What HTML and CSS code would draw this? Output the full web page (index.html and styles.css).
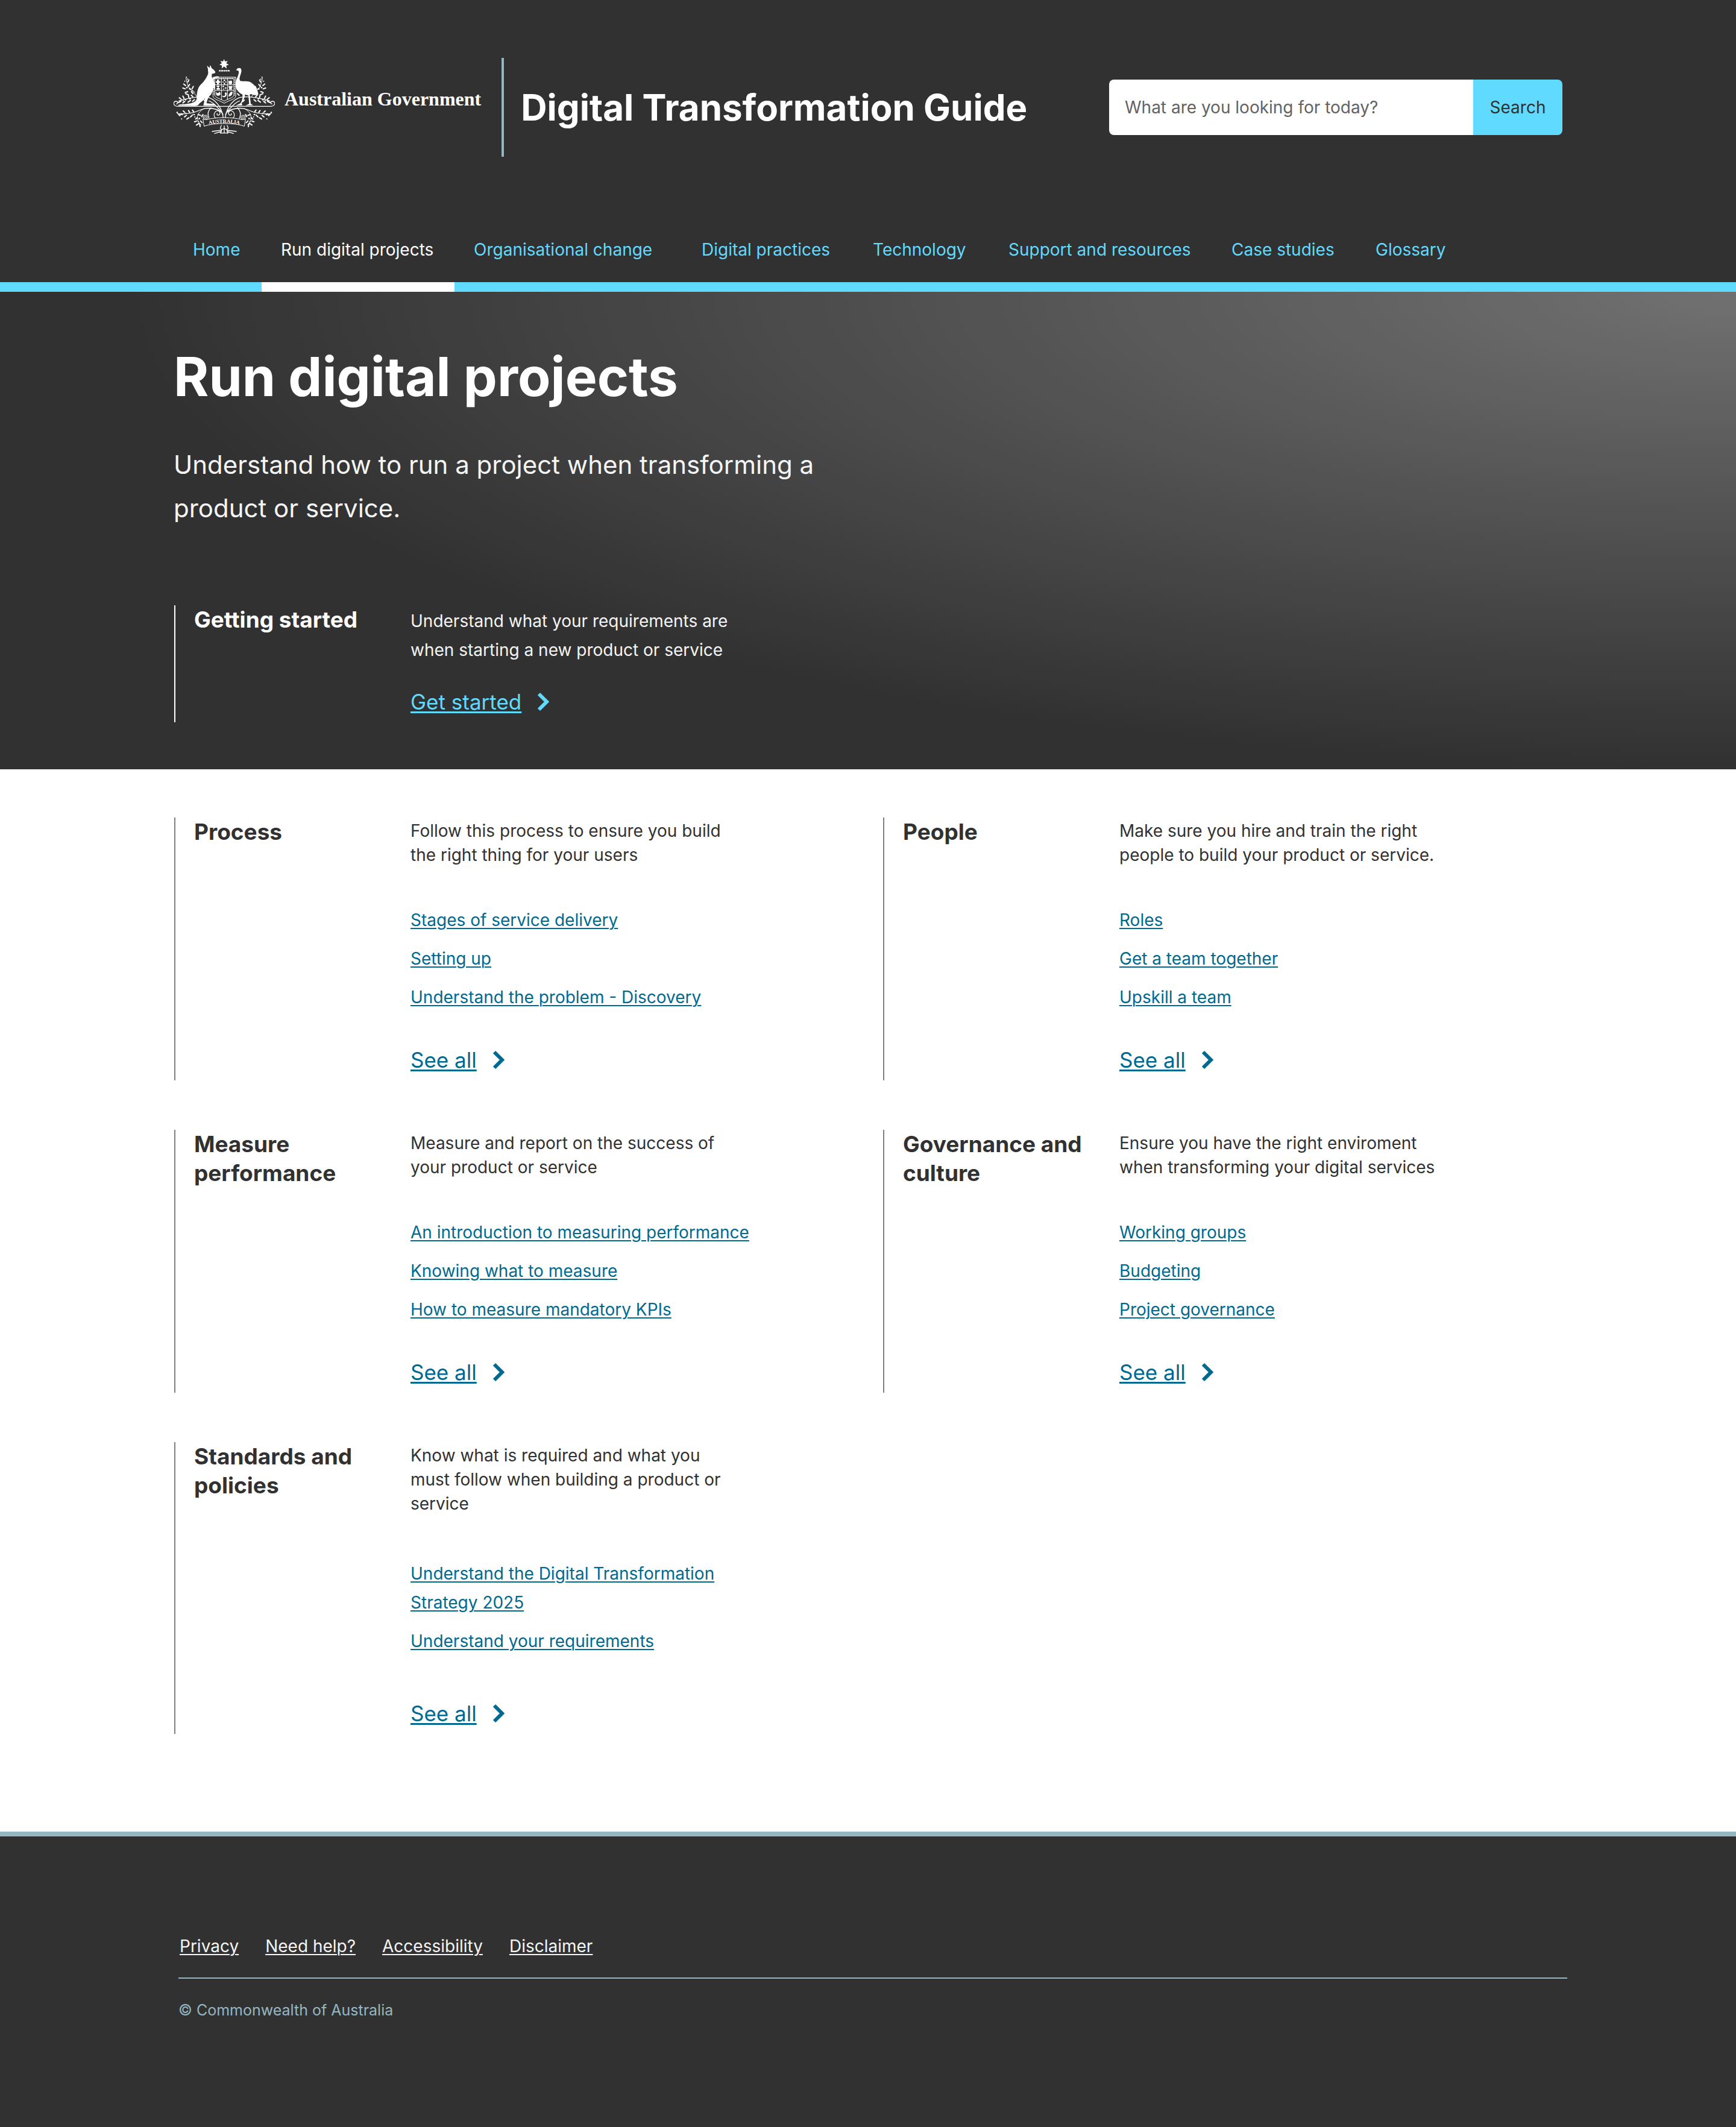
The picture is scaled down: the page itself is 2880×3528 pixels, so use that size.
FILE: index.html
```
<!DOCTYPE html>
<html lang="en-AU">
<head>
<meta charset="utf-8">
<meta name="viewport" content="width=device-width, initial-scale=1">
<title>Run digital projects - Digital Transformation Guide</title>
<link rel="stylesheet" href="styles.css">
</head>
<body>
<svg class="sprite" aria-hidden="true">
  <symbol id="chevron" viewBox="0 0 20 32">
    <path d="M3 3 L16 16 L3 29" fill="none" stroke="currentColor" stroke-width="6"/>
  </symbol>
</svg>

<header class="header">
  <div class="masthead">
    <a class="logo" href="#">
      <svg class="crest" viewBox="24 24 504 372" aria-hidden="true">
        <defs>
          <path id="motto" d="M184 355 C215 338 337 338 368 355"/>
          <g id="foliage">
            <g fill="none" stroke="#fff" stroke-width="4" stroke-linecap="round">
              <!-- ground scroll -->
              <path d="M276 259 H44 C20 258 20 234 36 234 C47 234 47 247 38 247"/>
              <!-- upper stems -->
              <path d="M272 330 C270 280 245 232 198 215 C150 205 90 220 50 232"/>
              <path d="M262 285 C240 265 225 240 200 232"/>
              <path d="M140 212 C125 180 95 185 86 118" stroke-width="3"/>
              <path d="M130 190 C120 180 112 176 100 172" stroke-width="3"/>
              <!-- lower stems -->
              <path d="M270 300 C258 268 190 262 160 276 C130 290 90 300 44 296"/>
              <path d="M262 320 C235 335 215 305 232 286 C250 272 262 294 250 302 C243 306 238 300 241 295"/>
              <path d="M176 270 C140 290 130 320 160 352" stroke-width="3"/>
              <path d="M210 266 C196 280 192 300 200 318"/>
            </g>
            <!-- leaves -->
            <g fill="none" stroke="#fff" stroke-width="6" stroke-linecap="round">
              <path d="M74 148 l10 8 M70 168 l12 4 M104 150 l-8 10 M122 160 l-6 12 M82 190 l12 -4 M112 186 l8 10 M100 128 l-5 10 M84 196 l14 6"/>
              <path d="M52 216 l10 8 M70 208 l6 12 M98 206 l2 10 M48 240 l12 -5 M70 242 l10 -8 M96 238 l12 -8 M118 234 l10 -8 M112 204 l8 8"/>
              <path d="M160 196 l-6 8 M210 196 l-8 8 M176 228 l8 8"/>
              <path d="M54 306 l8 -10 M72 282 l8 8 M78 312 l10 -8 M98 280 l6 9 M108 312 l10 -10 M118 278 l6 8 M90 322 l10 -6"/>
              <path d="M146 300 l12 4 M134 322 l8 -6 M128 336 l12 -4 M138 352 l12 -8 M156 360 l-2 -12 M166 340 l-8 -8 M170 300 l-6 10"/>
            </g>
            <g fill="#fff">
              <circle cx="88" cy="114" r="3"/><circle cx="94" cy="124" r="3"/><circle cx="80" cy="134" r="3"/>
              <circle cx="90" cy="166" r="4"/><circle cx="106" cy="172" r="4"/><circle cx="118" cy="182" r="3"/>
              <circle cx="58" cy="232" r="4"/><circle cx="84" cy="226" r="4"/><circle cx="106" cy="222" r="4"/><circle cx="72" cy="232" r="3"/>
              <circle cx="42" cy="290" r="4"/><circle cx="50" cy="300" r="4"/><circle cx="66" cy="300" r="4"/><circle cx="64" cy="322" r="3"/><circle cx="86" cy="294" r="3"/>
              <circle cx="126" cy="300" r="4"/><circle cx="130" cy="312" r="3"/><circle cx="152" cy="320" r="4"/><circle cx="148" cy="336" r="3"/>
            </g>
          </g>
        </defs>
        <use href="#foliage"/>
        <use href="#foliage" transform="translate(552 0) scale(-1 1)"/>
        <!-- Commonwealth Star and wreath -->
        <path fill="#fff" d="M275 24 L280 36 L293 33 L286 45 L299 52 L286 56 L288 71 L275 61 L263 71 L265 56 L252 52 L264 45 L257 33 L270 36 Z"/>
        <path d="M250 82 H303" stroke="#fff" stroke-width="7" stroke-dasharray="9 2"/>
        <!-- shield -->
        <path fill="#313131" stroke="#fff" stroke-width="3" d="M220 114 H333 V208 C330 226 300 228 276 244 C252 228 223 226 220 208 Z"/>
        <path fill="none" stroke="#fff" stroke-width="3" d="M229 122 H324 V204 C321 217 296 221 276 233 C256 221 232 217 229 204 Z"/>
        <path fill="none" stroke="#fff" stroke-width="3" d="M262 122 V226 M292 122 V226 M229 152 H324 M229 180 H324"/>
        <path fill="none" stroke="#fff" stroke-width="3" stroke-dasharray="6 5" d="M225 118 H328 V206 M225 118 V206"/>
        <g fill="#fff">
          <path d="M240 126 h10 v8 h7 v8 h-7 v8 h-10 v-8 h-6 v-8 h6 Z"/>
          <circle cx="277" cy="130" r="4"/><circle cx="270" cy="138" r="3"/><circle cx="284" cy="138" r="3"/><circle cx="277" cy="146" r="4"/>
          <path d="M297 130 l6 4 l6 -4 l6 4 v12 l-8 4 l-10 -4 Z"/>
          <path d="M238 156 h14 v6 h-4 v6 h6 v8 h-16 v-8 h5 v-6 h-5 Z"/>
          <circle cx="271" cy="160" r="4"/><circle cx="283" cy="168" r="4"/><circle cx="273" cy="173" r="3"/>
          <path d="M297 158 h20 v6 l-5 4 l5 8 h-20 l5 -8 l-5 -4 Z"/>
          <path d="M234 186 C240 196 246 196 254 186 L258 198 C254 208 240 210 236 200 Z"/>
          <path d="M266 204 C270 212 280 208 281 200 C276 194 280 186 288 192 C290 204 284 214 274 214 C268 214 265 210 266 204 Z"/>
          <path d="M298 204 C304 190 308 184 318 188 C316 200 312 208 298 210 Z"/>
        </g>
        <!-- kangaroo -->
        <path fill="#fff" d="M190 56 L203 68 L206 53 L214 70 C223 76 230 82 232 89 C231 95 222 96 215 97 C213 108 213 114 218 120 C224 114 234 107 246 110 C254 112 252 116 240 117 C230 118 226 124 223 130 C229 142 232 156 228 174 L220 166 C222 182 214 194 206 204 C196 214 191 228 188 244 L230 248 L234 256 L172 256 L180 218 C172 232 158 238 152 246 C146 255 140 257 130 257 L46 256 C46 249 60 249 80 248 C110 246 135 240 139 222 C140 190 142 168 160 150 C175 137 190 115 196 96 C197 88 194 80 195 74 Z"/>
        <!-- emu -->
        <path fill="#fff" d="M336 80 C338 70 348 65 357 70 C364 76 362 90 357 102 C352 116 350 124 356 133 C372 136 388 132 405 138 C425 148 440 168 446 200 C436 206 420 204 410 198 L403 200 L408 246 L420 254 L382 255 L400 247 L396 204 C388 204 384 200 380 200 C378 215 372 228 363 244 L366 254 L334 255 L357 244 C366 228 370 212 366 200 C345 190 332 172 332 150 C332 132 342 116 347 98 C350 88 349 83 344 81 Z"/>
        <!-- motto ribbon -->
        <path fill="#313131" stroke="#fff" stroke-width="3" d="M186 326 C230 312 322 312 366 326 L382 322 L376 358 C330 340 222 340 176 358 L170 322 Z"/>
        <circle cx="182" cy="314" r="11" fill="#313131" stroke="#fff" stroke-width="3"/>
        <circle cx="370" cy="314" r="11" fill="#313131" stroke="#fff" stroke-width="3"/>
        <circle cx="182" cy="314" r="5" fill="none" stroke="#fff" stroke-width="3"/>
        <circle cx="370" cy="314" r="5" fill="none" stroke="#fff" stroke-width="3"/>
        <path fill="none" stroke="#fff" stroke-width="4" stroke-linecap="round" d="M262 354 C250 372 262 380 276 368 C290 380 302 372 290 354 M276 356 V392 M262 378 L216 384 M262 384 L228 394 M290 378 L336 384 M290 384 L322 394 M264 374 L258 394 M288 374 L294 394 M260 392 H292"/>
        <text class="crest-motto" text-anchor="middle"><textPath href="#motto" startOffset="50%">AUSTRALIA</textPath></text>
      </svg>
      <span class="logo-text">Australian Government</span>
    </a>
    <div class="site-name">Digital Transformation Guide</div>
    <form class="search" role="search">
      <input class="search-input" type="search" placeholder="What are you looking for today?" aria-label="Search the guide">
      <button class="search-button" type="submit">Search</button>
    </form>
  </div>
  <nav class="nav" aria-label="Main">
    <ul class="nav-list">
      <li><a class="nav-link" href="#">Home</a></li>
      <li><a class="nav-link nav-link-active" href="#" aria-current="page">Run digital projects</a></li>
      <li><a class="nav-link" href="#">Organisational change</a></li>
      <li><a class="nav-link" href="#">Digital practices</a></li>
      <li><a class="nav-link" href="#">Technology</a></li>
      <li><a class="nav-link" href="#">Support and resources</a></li>
      <li><a class="nav-link" href="#">Case studies</a></li>
      <li><a class="nav-link" href="#">Glossary</a></li>
    </ul>
  </nav>
</header>

<section class="hero">
  <h1 class="hero-title">Run digital projects</h1>
  <p class="hero-lead">Understand how to run a project when transforming a product or service.</p>
  <div class="topic topic-hero">
    <h2 class="topic-title">Getting started</h2>
    <div class="topic-body">
      <p class="topic-text">Understand what your requirements are when starting a new product or service</p>
      <a class="more" href="#"><span class="more-label">Get started</span><svg class="chevron" aria-hidden="true"><use href="#chevron"/></svg></a>
    </div>
  </div>
</section>

<main class="topics">
  <section class="topic">
    <h2 class="topic-title">Process</h2>
    <div class="topic-body">
      <p class="topic-text">Follow this process to ensure you build the right thing for your users</p>
      <ul class="links">
        <li><a href="#">Stages of service delivery</a></li>
        <li><a href="#">Setting up</a></li>
        <li><a href="#">Understand the problem - Discovery</a></li>
      </ul>
      <a class="more" href="#"><span class="more-label">See all</span><svg class="chevron" aria-hidden="true"><use href="#chevron"/></svg></a>
    </div>
  </section>
  <section class="topic">
    <h2 class="topic-title">People</h2>
    <div class="topic-body">
      <p class="topic-text">Make sure you hire and train the right people to build your product or service.</p>
      <ul class="links">
        <li><a href="#">Roles</a></li>
        <li><a href="#">Get a team together</a></li>
        <li><a href="#">Upskill a team</a></li>
      </ul>
      <a class="more" href="#"><span class="more-label">See all</span><svg class="chevron" aria-hidden="true"><use href="#chevron"/></svg></a>
    </div>
  </section>
  <section class="topic">
    <h2 class="topic-title">Measure performance</h2>
    <div class="topic-body">
      <p class="topic-text">Measure and report on the success of your product or service</p>
      <ul class="links">
        <li><a href="#">An introduction to measuring performance</a></li>
        <li><a href="#">Knowing what to measure</a></li>
        <li><a href="#">How to measure mandatory KPIs</a></li>
      </ul>
      <a class="more" href="#"><span class="more-label">See all</span><svg class="chevron" aria-hidden="true"><use href="#chevron"/></svg></a>
    </div>
  </section>
  <section class="topic">
    <h2 class="topic-title">Governance and culture</h2>
    <div class="topic-body">
      <p class="topic-text">Ensure you have the right enviroment when transforming your digital services</p>
      <ul class="links">
        <li><a href="#">Working groups</a></li>
        <li><a href="#">Budgeting</a></li>
        <li><a href="#">Project governance</a></li>
      </ul>
      <a class="more" href="#"><span class="more-label">See all</span><svg class="chevron" aria-hidden="true"><use href="#chevron"/></svg></a>
    </div>
  </section>
  <section class="topic topic-roomy">
    <h2 class="topic-title">Standards and policies</h2>
    <div class="topic-body">
      <p class="topic-text">Know what is required and what you must follow when building a product or service</p>
      <ul class="links">
        <li><a href="#">Understand the Digital Transformation Strategy 2025</a></li>
        <li><a href="#">Understand your requirements</a></li>
      </ul>
      <a class="more" href="#"><span class="more-label">See all</span><svg class="chevron" aria-hidden="true"><use href="#chevron"/></svg></a>
    </div>
  </section>
</main>

<footer class="footer">
  <ul class="footer-links">
    <li><a href="#">Privacy</a></li>
    <li><a href="#">Need help?</a></li>
    <li><a href="#">Accessibility</a></li>
    <li><a href="#">Disclaimer</a></li>
  </ul>
  <p class="copyright">© Commonwealth of Australia</p>
</footer>
</body>
</html>
```
FILE: styles.css
```
:root {
  --dark: #313131;
  --accent: #61daff;
  --muted: #94b7c1;
  --link: #00698f;
  --gutter: 10%;
}

* { box-sizing: border-box; }

body {
  margin: 0;
  background: #fff;
  color: var(--dark);
  font-family: Inter, "Liberation Sans", sans-serif;
  font-size: 28px;
  line-height: 48px;
}

h1, h2, p, ul { margin: 0; padding: 0; }
ul { list-style: none; }

a {
  color: inherit;
  text-decoration-thickness: 2px;
  text-underline-offset: 3px;
}

.sprite { display: none; }

/* Header */
.header { background: var(--dark); color: #fff; padding-top: 96px; }

.masthead {
  display: flex;
  align-items: center;
  padding: 0 var(--gutter);
}

.logo {
  display: flex;
  align-items: center;
  align-self: flex-start;
  gap: 16px;
  padding-top: 2px;
  margin-right: 34px;
  text-decoration: none;
}

.crest { width: 168px; height: 124px; flex: none; }

.crest-motto {
  fill: #fff;
  font-family: "Liberation Serif", serif;
  font-size: 26px;
  font-weight: 700;
}

.logo-text {
  padding-top: 8px;
  font-family: "Liberation Serif", serif;
  font-size: 32px;
  font-weight: 700;
  line-height: 40px;
  white-space: nowrap;
}

.site-name {
  border-left: 4px solid var(--muted);
  padding: 50px 0 50px 28px;
  font-size: 60px;
  font-weight: 700;
  line-height: 64px;
}

.search {
  display: flex;
  width: 752px;
  height: 92px;
  margin-left: auto;
  border-radius: 8px;
  overflow: hidden;
}

.search-input,
.search-button {
  border: 0;
  border-radius: 0;
  font: inherit;
  color: var(--dark);
}

.search-input {
  flex: 1;
  min-width: 0;
  padding: 0 26px;
  background: #fff;
  appearance: none;
}

.search-input::placeholder { color: #636363; opacity: 1; }

.search-button { width: 148px; padding: 0; background: var(--accent); }

.nav {
  margin-top: 100px;
  padding: 0 var(--gutter);
  border-bottom: 16px solid var(--accent);
}

.nav-list {
  display: grid;
  grid-template-columns: 146fr 320fr 378fr 284fr 225fr 370fr 239fr 342fr;
  margin-bottom: -16px;
}

.nav-link {
  display: block;
  padding: 38px 0 38px 32px;
  border-bottom: 16px solid transparent;
  color: var(--accent);
  line-height: 32px;
  text-decoration: none;
  white-space: nowrap;
}

.nav-link-active { color: #fff; border-bottom-color: #fff; }

/* Hero */
.hero {
  padding: 93px var(--gutter) 78px;
  color: #fff;
  background: radial-gradient(ellipse 93% 100% at 100% 0, #717171, #313131);
}

.hero-title { font-size: 89px; font-weight: 700; line-height: 96px; }

.hero-lead {
  max-width: 1120px;
  margin: 62px 0 125px;
  color: #f5f5f5;
  font-size: 42px;
  line-height: 72px;
}

/* Topics */
.topics {
  display: grid;
  grid-template-columns: 1fr 1fr;
  gap: 82px 48px;
  padding: 80px var(--gutter) 162px;
}

.topic {
  display: grid;
  grid-template-columns: 359px 1fr;
  margin-left: 1px;
  padding-left: 31px;
  border-left: 2px solid #808080;
}

.topic-title {
  max-width: 320px;
  font-size: 37px;
  font-weight: 700;
  line-height: 48px;
}

.topic-body { padding: 2px 0 10px; }

.topic-text { max-width: 544px; line-height: 40px; }

.links {
  display: grid;
  gap: 16px;
  max-width: 600px;
  margin: 64px 0 56px;
  color: var(--link);
}

.topic-roomy .links { margin: 72px 0; }

.more {
  display: inline-flex;
  align-items: center;
  gap: 26px;
  color: var(--link);
  font-size: 35px;
  text-decoration: none;
  vertical-align: top;
}

.more-label {
  text-decoration: underline;
  text-decoration-thickness: 3px;
  text-underline-offset: 3px;
}

.chevron { width: 20px; height: 32px; }

.topic-hero { border-left-color: #fff; }
.topic-hero .topic-text { margin-bottom: 38px; color: #f5f5f5; line-height: 48px; }
.topic-hero .more { color: var(--accent); }

/* Footer */
.footer {
  padding: 158px calc(var(--gutter) - 8px) 174px calc(var(--gutter) + 8px);
  border-top: 8px solid var(--muted);
  background: var(--dark);
  color: #f5f5f5;
}

.footer-links {
  display: flex;
  gap: 44px;
  padding: 0 0 28px 2px;
  border-bottom: 2px solid var(--muted);
}

.copyright {
  margin-top: 32px;
  color: var(--muted);
  font-size: 25px;
  line-height: 40px;
}
```
